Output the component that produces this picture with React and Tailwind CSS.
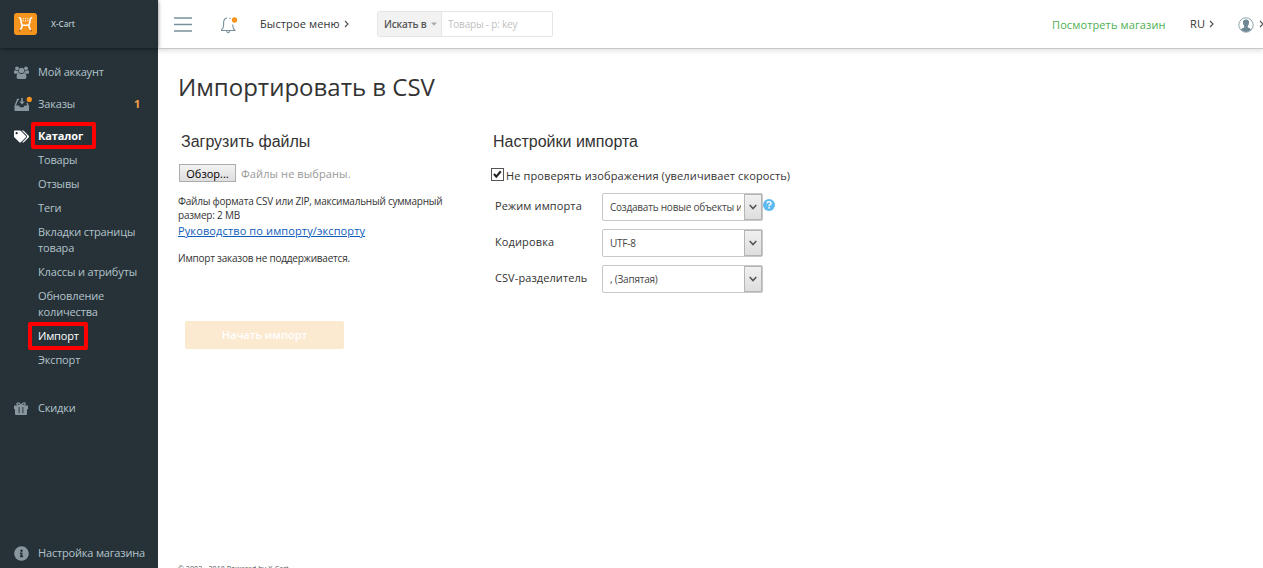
import React from 'react';
import { FaTags, FaInfoCircle } from 'react-icons/fa';

const subItems = [
  ['Товары'],
  ['Отзывы'],
  ['Теги'],
  ['Вкладки страницы', 'товара'],
  ['Классы и атрибуты'],
  ['Обновление', 'количества'],
  ['Импорт'],
  ['Экспорт'],
];

function XCartLogo() {
  return (
    <svg width="23" height="22" viewBox="0 0 23 22">
      <rect width="23" height="22" rx="3" fill="#f7941e" />
      <path d="M5.3 4.8Q6.8 5 7 7.5Q7.2 11.6 8.6 12.2H14.4Q15.8 11.6 16 7.5Q16.2 5 17.7 4.8M8.2 12.4Q7.8 15.4 6.2 16.8M14.8 12.4Q15.2 15.4 16.8 16.8" fill="none" stroke="#fff" strokeWidth="1.6" strokeLinecap="round" />
      <g fill="#fff" opacity=".85">
        <rect x="8.6" y="5" width="1.2" height="1.2" />
        <rect x="10.9" y="5" width="1.2" height="1.2" />
        <rect x="13.2" y="5" width="1.2" height="1.2" />
        <rect x="8.6" y="7.2" width="1.2" height="1.2" />
        <rect x="10.9" y="7.2" width="1.2" height="1.2" />
        <rect x="13.2" y="7.2" width="1.2" height="1.2" />
      </g>
      <circle cx="5.8" cy="17.5" r="1" fill="#a85b10" />
      <circle cx="17.2" cy="17.5" r="1" fill="#a85b10" />
    </svg>
  );
}

function UsersIcon() {
  return (
    <svg width="15" height="13" viewBox="0 0 15 13" fill="#8a969d">
      <circle cx="3" cy="2.3" r="1.9" />
      <circle cx="12" cy="2.3" r="1.9" />
      <circle cx="7.5" cy="4.4" r="2.7" />
      <path d="M0 7V5.6Q0 4 1.4 4.2Q3 5.1 4.2 4.6Q4.2 6 5 6.8Q3.8 6.9 3.1 7.8H1Q0 7.8 0 7ZM15 7V5.6Q15 4 13.6 4.2Q12 5.1 10.8 4.6Q10.8 6 10 6.8Q11.2 6.9 11.9 7.8H14Q15 7.8 15 7Z" />
      <path d="M2.6 11.3Q2.6 7 5 7.1Q7.5 8.8 10 7.1Q12.4 7 12.4 11.3Q12.4 13 10.8 13H4.2Q2.6 13 2.6 11.3Z" />
    </svg>
  );
}

function InboxIcon() {
  return (
    <svg width="18" height="15" viewBox="0 0 18 15" className="block overflow-visible">
      <path d="M5 2.5H3.6L1.2 8.8M13 6L14.2 9" fill="none" stroke="#8a969d" strokeWidth="1.4" />
      <path d="M8 1V5" stroke="#8a969d" strokeWidth="1.6" />
      <path d="M5.2 4.4H10.8L8 7.4Z" fill="#8a969d" />
      <path d="M.5 8.5H5L6 10.2H9.5L10.5 8.5H15V14H.5Z" fill="#8a969d" />
      <circle cx="15.3" cy="2.4" r="2.6" fill="#f7941e" />
    </svg>
  );
}

function GiftIcon() {
  return (
    <svg width="14" height="13" viewBox="0 0 14 13">
      <path d="M7 3.6Q5.6 .8 4.2 .8Q2.9 .8 2.9 2T4.4 3.4H9.6Q11.1 3.2 11.1 2T9.8 .8Q8.4 .8 7 3.6Z" fill="none" stroke="#8a969d" strokeWidth="1.3" />
      <path d="M0 3.6H14V7.2H13V12Q13 13 12 13H2Q1 13 1 12V7.2H0Z" fill="#8a969d" />
      <path d="M5.1 5V11.2M8.9 5V11.2" stroke="#263238" strokeWidth=".9" />
    </svg>
  );
}

function Chevron() {
  return (
    <svg width="5" height="8" viewBox="0 0 5 8" className="shrink-0">
      <path d="M1 1L4 4L1 7" fill="none" stroke="#555" strokeWidth="1.2" />
    </svg>
  );
}

function NavItem({ icon, label, active, badge }) {
  return (
    <div className={'flex items-start pl-[14px] pt-2 text-[11px] leading-4 ' + (active ? 'h-7 font-bold tracking-[-0.1px] text-white' : 'h-8 tracking-[-0.17px] text-[#b4c3cb]')}>
      <span className="flex h-4 w-6 items-center">{icon}</span>
      <span className="relative whitespace-nowrap">
        {label}
        {active && <span className="absolute -left-[7px] -top-[6px] h-[27px] w-[65px] rounded-[2px] border-4 border-[#fe0000]" />}
      </span>
      {badge && <span className="ml-auto mr-[18px] font-bold text-[#f7a04b]">{badge}</span>}
    </div>
  );
}

function Sidebar() {
  return (
    <aside className="flex h-[568px] w-[158px] shrink-0 flex-col bg-[#263238]">
      <div className="flex h-12 items-center pl-[14px] shadow-[0_1px_4px_rgba(0,0,0,0.5)]">
        <XCartLogo />
        <span className="ml-[14px] text-[8px] font-semibold text-[#b4c3cb]">X-Cart</span>
      </div>
      <nav className="flex flex-1 flex-col pt-2">
        <NavItem icon={<UsersIcon />} label="Мой аккаунт" />
        <NavItem icon={<InboxIcon />} label="Заказы" badge="1" />
        <NavItem icon={<FaTags size={15} color="#fff" />} label="Каталог" active />
        {subItems.map((lines) => (
          <div key={lines[0]} className={'py-1 pl-[38px] text-[11px] leading-4 tracking-[-0.15px] ' + (lines[0] === 'Импорт' ? 'text-white' : 'text-[#b4c3cb]')}>
            {lines.map((l) => (
              <div key={l} className="relative whitespace-nowrap">
                {l}
                {l === 'Импорт' && <span className="absolute -left-[10px] -top-[6px] h-[28px] w-[60px] rounded-[2px] border-4 border-[#fe0000]" />}
              </div>
            ))}
          </div>
        ))}
        <div className="mt-5">
          <NavItem icon={<GiftIcon />} label="Скидки" />
        </div>
        <div className="mb-[-1px] mt-auto">
          <NavItem icon={<FaInfoCircle size={15} color="#8a969d" />} label="Настройка магазина" />
        </div>
      </nav>
    </aside>
  );
}

function TopBar() {
  return (
    <header className="flex h-[49px] shrink-0 items-center border-b border-[#c4c8ca] pl-4 text-[11px] tracking-[0.12px] text-[#333] shadow-[0_2px_5px_rgba(0,0,0,0.12)]">
      <svg width="18" height="15" viewBox="0 0 18 15" className="shrink-0">
        <path d="M0 1H18M0 7.5H18M0 14H18" stroke="#78909c" strokeWidth="1.3" />
      </svg>
      <svg width="19" height="18" viewBox="0 0 19 18" className="ml-[28px] mt-[2px] shrink-0">
        <path d="M1 14.5H15.5M1.3 14.3Q3.6 12.5 3.6 9V6.5Q3.8 2.7 6.8 1.9M9.5 1.9L10.6 2.4M12.8 8.5V10Q13 13 15 14.3" fill="none" stroke="#78909c" strokeWidth="1.1" />
        <path d="M6.5 15.2Q8.2 18 10 15.2" fill="none" stroke="#78909c" strokeWidth="1.1" />
        <circle cx="14.5" cy="4" r="2.7" fill="#f7941e" />
      </svg>
      <span className="ml-[21px] w-[80px] whitespace-nowrap">Быстрое меню</span>
      <span className="ml-[4px] mr-px flex"><Chevron /></span>
      <div className="ml-[27px] flex h-[26px] w-[176px] rounded-[2px] border border-[#e6e6e6] text-[10px] tracking-[-0.2px]">
        <div className="flex w-[64px] items-center border-r border-[#e6e6e6] bg-[#f2f2f2] pl-[6px] font-semibold text-[#555]">
          <span className="w-[47px] whitespace-nowrap">Искать в</span>
          <svg width="6" height="4" viewBox="0 0 6 4"><path d="M0 .5H6L3 3.8Z" fill="#aaa" /></svg>
        </div>
        <div className="flex items-center pl-[6px] text-[#bfbfbf]">Товары - p: key</div>
      </div>
      <span className="ml-auto w-[114px] whitespace-nowrap pt-[2px] tracking-[0.12px] text-[#4caf50]">Посмотреть магазин</span>
      <span className="ml-[24px] w-[15px]">RU</span>
      <span className="ml-[4px] flex"><Chevron /></span>
      <svg width="16" height="16" viewBox="0 0 16 16" className="ml-[24px] mt-px shrink-0">
        <circle cx="8" cy="8" r="7.2" fill="#fff" stroke="#90a4ae" strokeWidth="1" />
        <path d="M8 2.5C10.3 2.5 11.3 4 11 6Q10.8 8 9.8 9V10.6Q12.4 11.2 13 12.6Q11 15 8 15T3 12.6Q3.6 11.2 6.2 10.6V9Q5.2 8 5 6C4.7 4 5.7 2.5 8 2.5Z" fill="#6f8794" />
      </svg>
      <span className="ml-[5px] flex w-[4px] overflow-hidden"><Chevron /></span>
    </header>
  );
}

function SelectRow({ label, value, help, tight }) {
  return (
    <div className="flex h-9 items-start">
      <span className={'w-[108px] whitespace-nowrap pl-px pt-[5px] text-[11px] leading-4 ' + (tight ? 'tracking-[0.08px]' : 'tracking-[0.12px]')}>{label}</span>
      <div className="flex h-7 w-[161px] rounded-[2px] border border-[#c8c8c8]">
        <div className="w-[141px] pl-[7px] pr-[3px]">
          <div className="overflow-hidden whitespace-nowrap text-[10px] leading-[26px] tracking-[-0.22px] text-[#444]">{value}</div>
        </div>
        <div className="flex flex-1 items-center justify-center border border-[#b5b5b5] bg-linear-to-b from-[#f0f0f0] to-[#dedede]">
          <svg width="8" height="6" viewBox="0 0 8 6"><path d="M.7 1L4 4.5L7.3 1" fill="none" stroke="#555" strokeWidth="1.6" /></svg>
        </div>
      </div>
      {help && (
        <svg width="12" height="12" viewBox="0 0 12 12" className="mt-[6px]">
          <circle cx="6" cy="6" r="6" fill="#5ebaf0" />
          <path d="M4 4.4Q4.2 2.8 6 2.8T8 4.4Q8 5.4 6.9 5.9Q6.1 6.3 6.1 7.2" fill="none" stroke="#fff" strokeWidth="1.5" />
          <rect x="5.3" y="8.1" width="1.6" height="1.5" fill="#fff" />
        </svg>
      )}
    </div>
  );
}

function Content() {
  return (
    <main className="flex-1 overflow-hidden pl-5 text-[#333]">
      <h1 className="mt-[20px] whitespace-nowrap text-[24px] leading-9">Импортировать в CSV</h1>
      <div className="mt-[26px] flex h-[173px]">
        <section className="w-[312px]">
          <h2 className="ml-[3px] font-['Liberation_Sans',sans-serif] text-[16px] leading-[22px]">Загрузить файлы</h2>
          <div className="ml-px mt-[11px] flex items-center">
            <span className="flex h-[18px] w-[57px] items-center justify-center border border-[#adadad] bg-linear-to-b from-[#f2f2f2] to-[#dedede] pt-[2px] text-[11px] text-black">Обзор...</span>
            <span className="ml-[5px] pt-[2px] text-[11px] leading-4 tracking-[0.1px] text-[#999]">Файлы не выбраны.</span>
          </div>
          <p className="mt-[12px] whitespace-nowrap text-[10px] leading-[14px] tracking-[-0.22px]">Файлы формата CSV или ZIP, максимальный суммарный<br />размер: 2 MB</p>
          <p className="mt-px text-[11px] leading-4 tracking-[0.12px] text-[#0f5dbb] underline">Руководство по импорту/экспорту</p>
          <p className="mt-3 text-[10px] leading-[14px] tracking-[-0.22px]">Импорт заказов не поддерживается.</p>
        </section>
        <section>
          <h2 className="ml-[3px] font-['Liberation_Sans',sans-serif] text-[16px] leading-[22px]">Настройки импорта</h2>
          <div className="ml-px mt-[15px] flex h-[17px] items-start">
            <svg width="13" height="13" viewBox="0 0 13 13">
              <rect x=".5" y=".5" width="12" height="12" fill="#fff" stroke="#555" />
              <path d="M3 6L5.3 8.6L9.8 3.3" fill="none" stroke="#222" strokeWidth="2.1" />
            </svg>
            <span className="ml-[2px] whitespace-nowrap text-[11px] leading-4 tracking-[0.12px]">Не проверять изображения (увеличивает скорость)</span>
          </div>
          <div className="ml-1 mt-[8px]">
            <SelectRow label="Режим импорта" value="Создавать новые объекты и обновлять" help />
            <SelectRow label="Кодировка" value="UTF-8" />
            <SelectRow label="CSV-разделитель" value=", (Запятая)" tight />
          </div>
        </section>
      </div>
      <button className="ml-[7px] mt-[17px] block h-7 w-[159px] rounded-[2px] bg-[#fbe9d0] text-[11px] font-semibold text-white">Начать импорт</button>
      <footer className="mt-[215px] text-[7px] leading-[10px] tracking-[0.1px] text-[#555]">© 2002 - 2018 Powered by X-Cart</footer>
    </main>
  );
}

export default function App() {
  return (
    <div className="flex h-[568px] w-[1263px] overflow-hidden bg-white font-['Open_Sans','Noto_Sans',sans-serif]">
      <Sidebar />
      <div className="flex min-w-0 flex-1 flex-col">
        <TopBar />
        <Content />
      </div>
    </div>
  );
}
